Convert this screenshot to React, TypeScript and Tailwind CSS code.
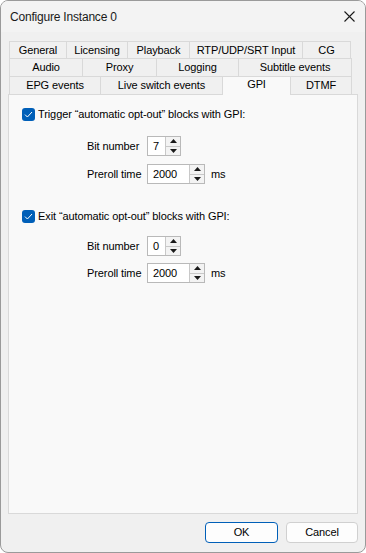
const font = { fontFamily: '"Liberation Sans", Arial, sans-serif' };

type Tab = { label: string; w: string; active?: boolean };

const rows: Tab[][] = [
  [
    { label: 'General', w: 'w-[58px]' },
    { label: 'Licensing', w: 'w-[62px]' },
    { label: 'Playback', w: 'w-[63px]' },
    { label: 'RTP/UDP/SRT Input', w: 'w-[114px]' },
    { label: 'CG', w: 'w-[49px]' },
  ],
  [
    { label: 'Audio', w: 'w-[74px]' },
    { label: 'Proxy', w: 'w-[75px]' },
    { label: 'Logging', w: 'w-[83px]' },
    { label: 'Subtitle events', w: 'w-[114px]' },
  ],
  [
    { label: 'EPG events', w: 'w-[92px]' },
    { label: 'Live switch events', w: 'w-[123px]' },
    { label: 'GPI', w: 'w-[69px]', active: true },
    { label: 'DTMF', w: 'w-[62px]' },
  ],
];

const txt = 'text-[11px] tracking-[-0.1px] text-black whitespace-nowrap';

function Arrow({ up }: { up?: boolean }) {
  return (
    <svg width="7" height="4" viewBox="0 0 7 4">
      <path d={up ? 'M0 4 L3.5 0 L7 4 Z' : 'M0 0 L3.5 4 L7 0 Z'} fill="#1a1a1a" />
    </svg>
  );
}

function SpinBox({ value, w }: { value: string; w: string }) {
  return (
    <div className="flex h-[20px] shrink-0 border border-[#b9b9b9] bg-white">
      <div className={`${w} flex items-center pl-[5px] ${txt}`}>{value}</div>
      <div className="flex w-[15px] flex-col border-l border-[#c8c8c8]">
        <div className="flex flex-1 items-center justify-center border-b border-[#c8c8c8] bg-[#f3f3f3]">
          <Arrow up />
        </div>
        <div className="flex flex-1 items-center justify-center bg-[#f3f3f3]">
          <Arrow />
        </div>
      </div>
    </div>
  );
}

function Check({ label }: { label: string }) {
  return (
    <div className="flex h-[14px] items-center gap-[3px] pl-[13px]">
      <div className="flex h-[13px] w-[13px] shrink-0 items-center justify-center rounded-[3px] bg-[#005fb8]">
        <svg width="9" height="7" viewBox="0 0 9 7">
          <path d="M1 3.6 L3.4 6 L8 1" stroke="white" strokeWidth="1" fill="none" />
        </svg>
      </div>
      <span className={txt}>{label}</span>
    </div>
  );
}

function Field({ label, value, w, unit }: { label: string; value: string; w: string; unit?: string }) {
  return (
    <div className="flex items-center pl-[78px]">
      <span className={`w-[60px] shrink-0 ${txt}`}>{label}</span>
      <SpinBox value={value} w={w} />
      {unit && <span className={`ml-[6px] ${txt}`}>{unit}</span>}
    </div>
  );
}

export default function App() {
  return (
    <div
      style={font}
      className="flex h-[553px] w-[366px] flex-col overflow-hidden rounded-[8px] border border-[#9a9a9a] bg-[#f0f0f0]"
    >
      {/* title bar */}
      <div className="flex h-[31px] items-center justify-between bg-[#f3f3f3] pl-[9px] pr-[10px]">
        <span className="text-[12px] tracking-[-0.2px] text-[#1a1a1a]">Configure Instance 0</span>
        <svg width="11" height="11" viewBox="0 0 11 11">
          <path d="M0.5 0.5 L10.5 10.5 M10.5 0.5 L0.5 10.5" stroke="#1a1a1a" strokeWidth="1.1" />
        </svg>
      </div>

      {/* tabs */}
      <div className="ml-[8px] mt-[9px] flex flex-col">
        {rows.map((row, i) => (
          <div key={i} className={`flex ${i === 0 ? 'h-[17px]' : 'h-[18px]'}`}>
            {row.map((t, j) => (
              <div
                key={t.label}
                className={`${t.w} ${j > 0 ? '-ml-px' : ''} ${
                  t.active
                    ? 'relative z-10 h-[19px] border-x border-t border-[#d9d9d9] bg-[#f9f9f9] pb-[3px]'
                    : 'border-x border-t border-[#d9d9d9] bg-[#f0f0f0]'
                } flex items-center justify-center ${txt}`}
              >
                {t.label}
              </div>
            ))}
          </div>
        ))}
      </div>

      {/* page */}
      <div className="ml-[7px] h-[420px] w-[350px] border border-[#d9d9d9] bg-[#f9f9f9] pt-[12px]">
        <Check label="Trigger “automatic opt-out” blocks with GPI:" />
        <div className="mt-[15px] flex flex-col gap-[8px]">
          <Field label="Bit number" value="7" w="w-[17px]" />
          <Field label="Preroll time" value="2000" w="w-[41px]" unit="ms" />
        </div>
        <div className="mt-[25px]">
          <Check label="Exit “automatic opt-out” blocks with GPI:" />
        </div>
        <div className="mt-[13px] flex flex-col gap-[7px]">
          <Field label="Bit number" value="0" w="w-[17px]" />
          <Field label="Preroll time" value="2000" w="w-[41px]" unit="ms" />
        </div>
      </div>

      {/* buttons */}
      <div className="mt-[8px] flex justify-end gap-[8px] pr-[7px]">
        <button className={`h-[21px] w-[73px] rounded-[4px] border border-[#005fb8] bg-[#fdfdfd] ${txt}`}>
          OK
        </button>
        <button className={`h-[21px] w-[72px] rounded-[4px] border border-[#d0d0d0] bg-[#fdfdfd] ${txt}`}>
          Cancel
        </button>
      </div>
    </div>
  );
}
